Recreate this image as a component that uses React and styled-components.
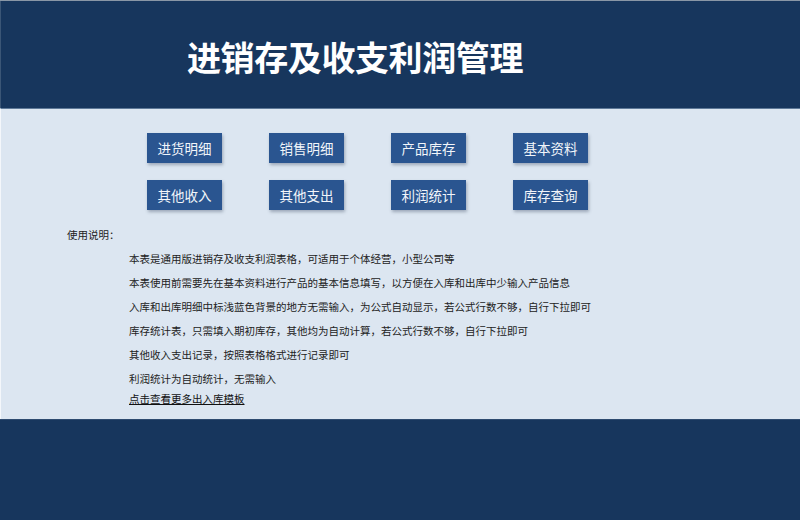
import { styled, createGlobalStyle } from "styled-components";

const GlobalStyle = createGlobalStyle`
  html, body {
    margin: 0;
    padding: 0;
    background: #17365d;
  }
  body {
    font-family: "Noto Sans CJK SC", "Noto Sans", sans-serif;
  }
`;

const StyledPage = styled.div`
  width: 800px;
  height: 520px;
  display: flex;
  flex-direction: column;
  background-color: #17365d;
  border-top: 1px solid #8a97a6;
  box-sizing: border-box;
  overflow: hidden;
`;

const Header = styled.div`
  height: 107px;
  display: flex;
  align-items: center;
  padding-left: 186px;
  box-sizing: border-box;
  background-color: #17365d;
  border-left: 1px solid #3b5676;
`;

const Title = styled.h1`
  margin: 0;
  color: #ffffff;
  font-size: 34px;
  font-weight: 700;
  line-height: 1;
  letter-spacing: -0.4px;
  padding-top: 4px;
`;

const Body = styled.div`
  height: 311px;
  background-color: #dce6f1;
  border-top: 1px solid #5f7a99;
  border-left: 1px solid #f4f7fb;
  box-sizing: border-box;
  padding-top: 24px;
`;

const ButtonGrid = styled.div`
  display: grid;
  grid-template-columns: repeat(4, 75px);
  column-gap: 47px;
  row-gap: 17px;
  margin-left: 146px;
`;

const NavButton = styled.button`
  height: 30px;
  padding: 0;
  border: none;
  background-color: #2a5590;
  color: #f2f5fa;
  font-family: inherit;
  font-size: 13.5px;
  box-shadow: 1px 2px 3px rgba(40, 55, 80, 0.35);
  cursor: pointer;
`;

const Notes = styled.div`
  margin-top: 13px;
  color: #222222;
  font-size: 10.5px;
`;

const NotesTitle = styled.div`
  line-height: 24px;
  padding-left: 66px;
`;

const NoteLine = styled.div`
  line-height: 24px;
  padding-left: 128px;
`;

const NoteLink = styled.a`
  display: block;
  line-height: 16px;
  margin-left: 128px;
  width: fit-content;
  color: #111111;
  text-decoration: underline;
  cursor: pointer;
`;

const Footer = styled.div`
  flex: 1;
  background-color: #17365d;
  border-top: 1px solid #2e4b70;
`;

const buttons = [
  "进货明细",
  "销售明细",
  "产品库存",
  "基本资料",
  "其他收入",
  "其他支出",
  "利润统计",
  "库存查询",
];

const notes = [
  "本表是通用版进销存及收支利润表格，可适用于个体经营，小型公司等",
  "本表使用前需要先在基本资料进行产品的基本信息填写，以方便在入库和出库中少输入产品信息",
  "入库和出库明细中标浅蓝色背景的地方无需输入，为公式自动显示，若公式行数不够，自行下拉即可",
  "库存统计表，只需填入期初库存，其他均为自动计算，若公式行数不够，自行下拉即可",
  "其他收入支出记录，按照表格格式进行记录即可",
  "利润统计为自动统计，无需输入",
];

const App = () => {
  return (
    <>
      <GlobalStyle />
      <StyledPage>
        <Header>
          <Title>进销存及收支利润管理</Title>
        </Header>
        <Body>
          <ButtonGrid>
            {buttons.map((b) => (
              <NavButton key={b}>{b}</NavButton>
            ))}
          </ButtonGrid>
          <Notes>
            <NotesTitle>使用说明：</NotesTitle>
            {notes.map((n) => (
              <NoteLine key={n}>{n}</NoteLine>
            ))}
            <NoteLink>点击查看更多出入库模板</NoteLink>
          </Notes>
        </Body>
        <Footer />
      </StyledPage>
    </>
  );
};

export default App;
